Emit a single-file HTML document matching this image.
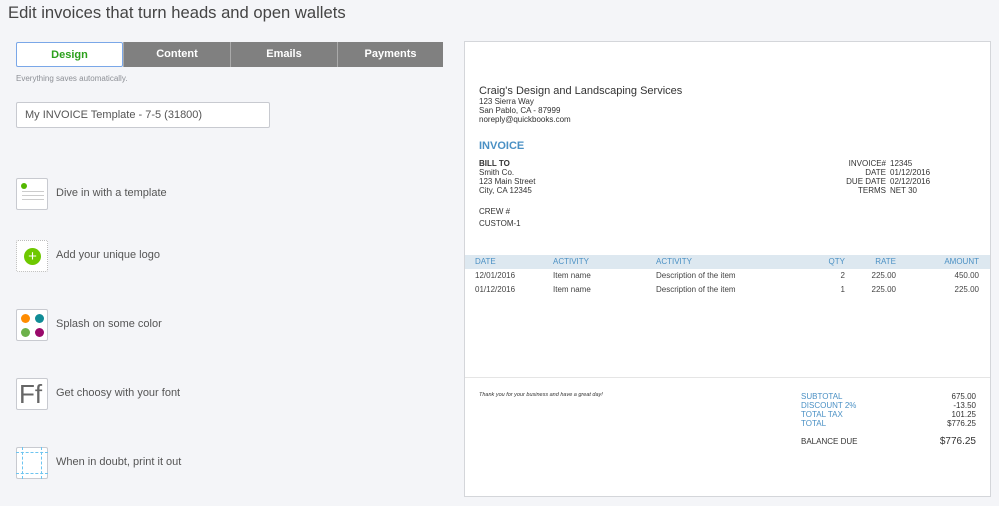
<!DOCTYPE html>
<html><head><meta charset="utf-8"><style>
*{margin:0;padding:0;box-sizing:border-box}
body{width:999px;height:506px;background:#f4f5f8;font-family:"Liberation Sans",sans-serif;position:relative;overflow:hidden;color:#393a3d}
.a{position:absolute;white-space:nowrap}
.tab{position:absolute;top:42px;height:25px;background:#808080;color:#fff;font-size:11px;font-weight:bold;text-align:center;line-height:25px;border-left:1px solid #aaa}
.ic{position:absolute;left:16px;width:32px;height:32px;background:#fff;border:1px solid #c8cad0;border-radius:2px}
.lbl{position:absolute;left:56px;font-size:11px;color:#555}
.p{position:absolute;left:464px;top:41px;width:527px;height:456px;background:#fff;border:1px solid #d4d6da}
.s{font-size:8px;line-height:9px}
.b{color:#4a90c4}
</style></head><body>
<div class="a" style="left:8px;top:3px;font-size:16.6px;color:#444">Edit invoices that turn heads and open wallets</div>
<div class="tab" style="left:16px;width:107px;background:#fff;color:#2ca01c;border:1px solid #7aa7e8;border-radius:2px">Design</div>
<div class="tab" style="left:123px;width:107px">Content</div>
<div class="tab" style="left:230px;width:107px">Emails</div>
<div class="tab" style="left:337px;width:106px">Payments</div>
<div class="a" style="left:16px;top:74px;font-size:8px;color:#8d9096">Everything saves automatically.</div>
<div class="a" style="left:16px;top:102px;width:254px;height:26px;background:#fff;border:1px solid #c8cad0;border-radius:2px;font-size:11px;line-height:24px;padding-left:8px;color:#555">My INVOICE Template - 7-5 (31800)</div>

<div class="ic" style="top:178px"><div class="a" style="left:4px;top:4px;width:6px;height:6px;border-radius:50%;background:#53b700"></div><div class="a" style="left:5px;top:12px;width:22px;border-top:1px solid #ccc"></div><div class="a" style="left:5px;top:16px;width:22px;border-top:1px solid #ccc"></div><div class="a" style="left:5px;top:20px;width:22px;border-top:1px solid #ccc"></div></div>
<div class="lbl" style="top:187px">Dive in with a template</div>
<div class="ic" style="top:240px;border:1px dotted #bbb"><div class="a" style="left:7px;top:7px;width:17px;height:17px;border-radius:50%;background:#6ec800;color:#fff;font-size:15px;line-height:17px;text-align:center">+</div></div>
<div class="lbl" style="top:249px">Add your unique logo</div>
<div class="ic" style="top:309px"><div class="a" style="left:4px;top:4px;width:9px;height:9px;border-radius:50%;background:#ff8c00"></div><div class="a" style="left:18px;top:4px;width:9px;height:9px;border-radius:50%;background:#108c96"></div><div class="a" style="left:4px;top:18px;width:9px;height:9px;border-radius:50%;background:#6db14a"></div><div class="a" style="left:18px;top:18px;width:9px;height:9px;border-radius:50%;background:#9a0a6b"></div></div>
<div class="lbl" style="top:318px">Splash on some color</div>
<div class="ic" style="top:378px;font-size:26px;line-height:30px;color:#666;padding-left:2px">Ff</div>
<div class="lbl" style="top:387px">Get choosy with your font</div>
<div class="ic" style="top:447px"><div class="a" style="left:5px;top:-1px;width:20px;height:32px;border-left:1px dashed #6cc4f0;border-right:1px dashed #6cc4f0"></div><div class="a" style="left:-1px;top:4px;width:32px;height:22px;border-top:1px dashed #6cc4f0;border-bottom:1px dashed #6cc4f0"></div></div>
<div class="lbl" style="top:456px">When in doubt, print it out</div>

<div class="p">
<div class="a" style="left:14px;top:43px;font-size:11px;color:#333">Craig's Design and Landscaping Services</div>
<div class="a s" style="left:14px;top:55px;color:#333">123 Sierra Way<br>San Pablo, CA - 87999<br>noreply@quickbooks.com</div>
<div class="a b" style="left:14px;top:98px;font-size:11px;font-weight:bold">INVOICE</div>
<div class="a s" style="left:14px;top:117px;color:#333"><b>BILL TO</b><br>Smith Co.<br>123 Main Street<br>City, CA 12345</div>
<div class="a s" style="left:350px;top:117px;width:71px;text-align:right;color:#333">INVOICE#<br>DATE<br>DUE DATE<br>TERMS</div>
<div class="a s" style="left:425px;top:117px;color:#333">12345<br>01/12/2016<br>02/12/2016<br>NET 30</div>
<div class="a s" style="left:14px;top:165px;color:#333">CREW #</div>
<div class="a s" style="left:14px;top:177px;color:#333">CUSTOM-1</div>
<div class="a" style="left:0;top:213px;width:525px;height:14px;background:#dde8f0"></div>
<div class="a s b" style="left:10px;top:215px">DATE</div>
<div class="a s b" style="left:88px;top:215px">ACTIVITY</div>
<div class="a s b" style="left:191px;top:215px">ACTIVITY</div>
<div class="a s b" style="left:350px;top:215px;width:30px;text-align:right">QTY</div>
<div class="a s b" style="left:380px;top:215px;width:51px;text-align:right">RATE</div>
<div class="a s b" style="left:440px;top:215px;width:74px;text-align:right">AMOUNT</div>
<div class="a s" style="left:10px;top:227px;color:#444;line-height:14px">12/01/2016<br>01/12/2016</div>
<div class="a s" style="left:88px;top:227px;color:#444;line-height:14px">Item name<br>Item name</div>
<div class="a s" style="left:191px;top:227px;color:#444;line-height:14px">Description of the item<br>Description of the item</div>
<div class="a s" style="left:350px;top:227px;width:30px;text-align:right;color:#444;line-height:14px">2<br>1</div>
<div class="a s" style="left:380px;top:227px;width:51px;text-align:right;color:#444;line-height:14px">225.00<br>225.00</div>
<div class="a s" style="left:440px;top:227px;width:74px;text-align:right;color:#444;line-height:14px">450.00<br>225.00</div>
<div class="a" style="left:0;top:335px;width:525px;border-top:1px solid #e5e5e5"></div>
<div class="a" style="left:14px;top:350px;font-size:5.5px;font-style:italic;color:#333">Thank you for your business and have a great day!</div>
<div class="a s b" style="left:336px;top:350px">SUBTOTAL<br>DISCOUNT 2%<br>TOTAL TAX<br>TOTAL</div>
<div class="a s" style="left:440px;top:350px;width:71px;text-align:right;color:#333">675.00<br>-13.50<br>101.25<br>$776.25</div>
<div class="a s" style="left:336px;top:395px;color:#333">BALANCE DUE</div>
<div class="a" style="left:440px;top:394px;width:71px;text-align:right;font-size:10px;color:#333">$776.25</div>
</div>
</body></html>
